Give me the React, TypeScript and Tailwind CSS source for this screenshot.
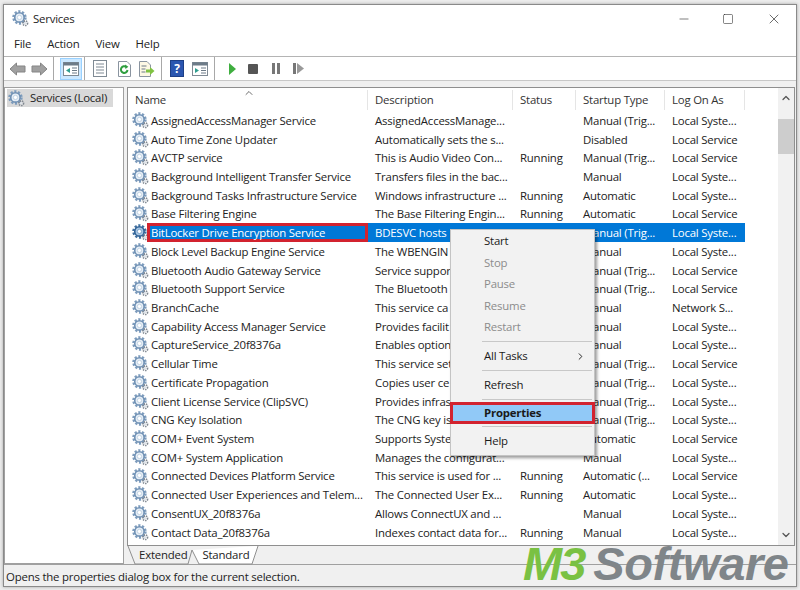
import { ChevronRight, ChevronUp, ChevronDown, Minus, Square, X } from "lucide-react";

const rows = [
  ["AssignedAccessManager Service", "AssignedAccessManage...", "", "Manual (Trig...", "Local Syste..."],
  ["Auto Time Zone Updater", "Automatically sets the s...", "", "Disabled", "Local Service"],
  ["AVCTP service", "This is Audio Video Con...", "Running", "Manual (Trig...", "Local Service"],
  ["Background Intelligent Transfer Service", "Transfers files in the bac...", "", "Manual", "Local Syste..."],
  ["Background Tasks Infrastructure Service", "Windows infrastructure ...", "Running", "Automatic", "Local Syste..."],
  ["Base Filtering Engine", "The Base Filtering Engin...", "Running", "Automatic", "Local Service"],
  ["BitLocker Drive Encryption Service", "BDESVC hosts", "", "Manual (Trig...", "Local Syste..."],
  ["Block Level Backup Engine Service", "The WBENGIN", "", "Manual", "Local Syste..."],
  ["Bluetooth Audio Gateway Service", "Service suppor", "", "Manual (Trig...", "Local Service"],
  ["Bluetooth Support Service", "The Bluetooth", "", "Manual (Trig...", "Local Service"],
  ["BranchCache", "This service ca", "", "Manual", "Network S..."],
  ["Capability Access Manager Service", "Provides facilit", "", "Manual", "Local Syste..."],
  ["CaptureService_20f8376a", "Enables option", "", "Manual", "Local Syste..."],
  ["Cellular Time", "This service set", "", "Manual (Trig...", "Local Service"],
  ["Certificate Propagation", "Copies user ce", "", "Manual (Trig...", "Local Syste..."],
  ["Client License Service (ClipSVC)", "Provides infras", "", "Manual (Trig...", "Local Syste..."],
  ["CNG Key Isolation", "The CNG key is", "", "Manual (Trig...", "Local Syste..."],
  ["COM+ Event System", "Supports Syste", "", "Automatic", "Local Service"],
  ["COM+ System Application", "Manages the configurat...", "", "Manual", "Local Syste..."],
  ["Connected Devices Platform Service", "This service is used for ...", "Running", "Automatic (...", "Local Service"],
  ["Connected User Experiences and Telem...", "The Connected User Ex...", "Running", "Automatic", "Local Syste..."],
  ["ConsentUX_20f8376a", "Allows ConnectUX and ...", "", "Manual", "Local Syste..."],
  ["Contact Data_20f8376a", "Indexes contact data for...", "Running", "Manual", "Local Syste..."],
  ["", "", "", "", ""],
];

const menu = [
  { label: "Start", h: "h-[22px]" },
  { label: "Stop", h: "h-[21px]", off: true },
  { label: "Pause", h: "h-[22px]", off: true },
  { label: "Resume", h: "h-[21px]", off: true },
  { label: "Restart", h: "h-[22px]", off: true, sep: true },
  { label: "All Tasks", h: "h-[22px]", arrow: true, sep: true },
  { label: "Refresh", h: "h-[22px]", sep: true },
  { label: "Properties", h: "h-[22px]", hot: true, sep: true },
  { label: "Help", h: "h-[22px]" },
];

function Gear({ size = 17, dark = false }: { size?: number; dark?: boolean }) {
  return (
    <svg width={size} height={size} viewBox="0 0 16 16" className="shrink-0">
      <circle cx="7" cy="7" r="5.6" fill="none" stroke={dark ? "#3f6f9f" : "#7d9cbd"} strokeWidth="2.4" strokeDasharray="2 1.52" />
      <circle cx="7" cy="7" r="4.4" fill={dark ? "#a9c6e2" : "#e6eef6"} stroke={dark ? "#2f6196" : "#6f90b4"} strokeWidth="1.5" />
      <circle cx="7" cy="7" r="2" fill="#fff" stroke={dark ? "#6f9bc6" : "#b9cde0"} strokeWidth="0.8" />
      <circle cx="12.4" cy="12.4" r="2.2" fill="none" stroke="#7f8790" strokeWidth="1.6" strokeDasharray="1.2 0.8" />
      <circle cx="12.4" cy="12.4" r="1.2" fill="#dfe3e8" />
    </svg>
  );
}

function Sep() {
  return <div className="w-px h-[23px] bg-[#a8a8a8] shrink-0" />;
}

function NavArrow({ flip = false }: { flip?: boolean }) {
  return (
    <svg width="17" height="14" viewBox="0 0 17 14" className="shrink-0">
      <path
        d={flip ? "M16 7 L9.5 1 V4 H1 V10 H9.5 V13 Z" : "M1 7 L7.5 1 V4 H16 V10 H7.5 V13 Z"}
        fill="#a0a0a0"
        stroke="#858585"
      />
    </svg>
  );
}

function ConsoleIcon({ right = false }: { right?: boolean }) {
  return (
    <svg width="16" height="14" viewBox="0 0 16 14" className="shrink-0">
      <rect x="0.5" y="0.5" width="15" height="13" fill="#fff" stroke="#7f8a94" />
      <rect x="0.5" y="0.5" width="15" height="3" fill="#6d7b88" />
      <path d={right ? "M3 6 L7 8.5 L3 11 Z" : "M7 6 L3 8.5 L7 11 Z"} fill="#2f9e8f" />
      <path d="M9 6h5M9 8.5h5M9 11h5" stroke="#6d7b88" />
    </svg>
  );
}

function Toolbar() {
  return (
    <div className="flex items-center h-[24px] shrink-0 border-t border-[#b4b4b4] bg-white pl-[5px]">
      <div className="flex items-center w-[44px] gap-[5px]"><NavArrow /><NavArrow flip /></div>
      <Sep />
      <div className="ml-[6px] flex items-center justify-center w-[22px] h-[22px] bg-[#cce8ff] border border-[#99d1ff]">
        <ConsoleIcon />
      </div>
      <div className="ml-[2px]"><Sep /></div>
      <svg width="16" height="17" viewBox="0 0 16 17" className="ml-[7px]">
        <rect x="1.5" y="0.5" width="13" height="16" fill="#fff" stroke="#7f8a94" />
        <path d="M4 4h8M4 7h8M4 10h8M4 13h8" stroke="#7f8a94" />
      </svg>
      <svg width="15" height="16" viewBox="0 0 15 16" className="ml-[9px]">
        <path d="M1.5 .5H10L13.5 4V15.5H1.5Z" fill="#fff" stroke="#8a94a0" />
        <path d="M10.5 9A3.3 3.3 0 1 1 9.3 6" fill="none" stroke="#2f9e3f" strokeWidth="2" />
        <path d="M8 3.6L11.4 5.8L8.4 8Z" fill="#2f9e3f" />
      </svg>
      <svg width="17" height="16" viewBox="0 0 17 16" className="ml-[6px]">
        <path d="M1.5 .5H9L12.5 4V15.5H1.5Z" fill="#fdf8e4" stroke="#8a94a0" />
        <path d="M3.5 5h5M3.5 8h4M3.5 11h4" stroke="#6d7b88" />
        <path d="M8 8.5H12V6L16.5 10L12 14V11.5H8Z" fill="#7fc241" />
      </svg>
      <div className="ml-[6px]"><Sep /></div>
      <div className="ml-[8px] flex items-center justify-center w-[14px] h-[17px] bg-[#2a56b0] border border-[#1d3f86] text-white text-[12px] font-bold leading-none">?</div>
      <div className="ml-[8px]"><ConsoleIcon right /></div>
      <div className="ml-[6px]"><Sep /></div>
      <svg width="7" height="12" viewBox="0 0 7 12" className="ml-[14px]"><path d="M0 0L7 6L0 12Z" fill="#3fae3f" /></svg>
      <div className="ml-[12px] w-[10px] h-[10px] rounded-[1px] bg-[#555]" />
      <div className="ml-[14px] flex gap-[2px]"><div className="w-[3px] h-[11px] bg-[#777]" /><div className="w-[3px] h-[11px] bg-[#777]" /></div>
      <div className="ml-[13px] flex items-center gap-[1px]">
        <div className="w-[3px] h-[11px] bg-[#777]" />
        <svg width="7" height="11" viewBox="0 0 7 11"><path d="M0 0L7 5.5L0 11Z" fill="#999" /></svg>
      </div>
    </div>
  );
}

function ContextMenu() {
  return (
    <div className="absolute left-[450px] top-[229px] w-[145px] h-[227px] bg-[#f2f2f2] border border-[#c4c4c4] shadow-[2px_2px_3px_rgba(0,0,0,0.4)] text-[#1a1a1a]">
      {menu.map((m) => (
        <div key={m.label}>
          <div
            className={
              m.hot
                ? "flex items-center h-[22px] -mx-px pl-[31px] bg-[#91c9f7] border-[3px] border-[#d2232f] font-bold -my-px relative"
                : `flex items-center ${m.h} pl-[33px] ${m.off ? "text-[#8c8c8c]" : ""}`
            }
          >
            {m.label}
            {m.arrow && <ChevronRight size={11} className="ml-auto mr-[8px]" />}
          </div>
          {m.sep && <div className="h-px bg-[#c8c8c8] mr-[2px] ml-[31px] my-[3px]" />}
        </div>
      ))}
    </div>
  );
}

export default function App() {
  return (
    <div className="relative w-[800px] h-[590px] overflow-hidden bg-[#ececec] pl-[3px] pt-[4px] font-['Open_Sans','Noto_Sans',sans-serif] text-[11.4px] tracking-[-0.2px] text-[#222]">
      <div className="flex flex-col h-[583px] w-[794px] bg-white border border-[#8a8a8a] shadow-[0_0_3px_rgba(0,0,0,0.3)]">
        <div className="flex items-center h-[27px] shrink-0 pl-[8px]">
          <Gear />
          <span className="ml-[4px]">Services</span>
          <div className="ml-auto flex items-center">
            <Minus size={14} strokeWidth={1} className="mr-[31px]" />
            <Square size={12} strokeWidth={1.1} className="mr-[32px]" />
            <X size={16} strokeWidth={1} className="mr-[14px]" />
          </div>
        </div>
        <div className="flex items-center h-[24px] shrink-0 pl-[10px] gap-[16px] text-[#222]">
          <span>File</span>
          <span>Action</span>
          <span>View</span>
          <span>Help</span>
        </div>
        <Toolbar />
        <div className="flex flex-1 min-h-0 bg-[#f0f0f0] pt-[6px] pr-px gap-[3px] border-t border-[#c8c8c8]">
          <div className="w-[120px] shrink-0 bg-white border border-[#a0a0a0] p-[1px]">
            <div className="flex items-center h-[18px] bg-[#d9d9d9] w-[106px] ml-px pl-px gap-[5px] whitespace-nowrap">
              <Gear />
              <span>Services (Local)</span>
            </div>
          </div>
          <div className="flex flex-col flex-1 min-w-0">
            <div className="flex h-[459px] shrink-0 bg-white border border-[#8f8f8f] overflow-hidden">
              <div className="flex-1 min-w-0 relative">
                <div className="grid grid-cols-[240px_145px_63px_89px_80px] h-[23px] pb-[3px] items-center relative">
                  <ChevronUp size={12} className="absolute left-[115px] -top-[1px] text-[#6d6d6d]" />
                  {["Name", "Description", "Status", "Startup Type", "Log On As"].map((h) => (
                    <div key={h} className="pl-[7px] h-[20px] mt-[2px] flex items-center border-r border-[#e5e5e5] text-[#333]">{h}</div>
                  ))}
                </div>
                {rows.map((r, i) => {
                  const sel = i === 6;
                  return (
                    <div key={i} className="grid grid-cols-[240px_145px_63px_89px_80px] h-[18.73px] items-center">
                      <div className="flex items-center pl-[4px] relative h-full">
                        {r[0] && <Gear dark={sel} />}
                        <span className={sel ? "absolute left-[19px] right-0 top-0 h-[19px] pl-[1px] flex items-center bg-[#0078d7] text-white border-[3px] border-[#d2232f] whitespace-nowrap" : "pl-[2px] whitespace-nowrap"}>{r[0]}</span>
                      </div>
                      {r.slice(1).map((c, j) => (
                        <div key={j} className={`pl-[7px] whitespace-nowrap overflow-hidden h-full flex items-center ${sel ? "bg-[#0078d7] text-white" : ""}`}>{c}</div>
                      ))}
                    </div>
                  );
                })}
              </div>
              <div className="w-[16px] shrink-0 flex flex-col items-center bg-[#f1f1f1]">
                <ChevronUp size={12} strokeWidth={2.5} className="mt-[4px] text-[#555]" />
                <div className="w-full h-[35px] mt-[15px] bg-[#cdcdcd]" />
                <ChevronDown size={12} strokeWidth={2.5} className="mt-auto mb-[4px] text-[#555]" />
              </div>
            </div>
            <div className="relative flex flex-1 pl-[12px] items-center gap-[15px] text-[#222]">
              <svg width="134" height="19" viewBox="0 0 134 19" className="absolute left-0 top-0">
                <path d="M65 4 L72 18 H125 L131 0" fill="#fff" stroke="#8f8f8f" />
                <path d="M1 0 L8 18 H61 L65 4" fill="none" stroke="#8f8f8f" />
              </svg>
              <span className="relative">Extended</span>
              <span className="relative">Standard</span>
            </div>
          </div>
        </div>
        <div className="flex items-center h-[22px] shrink-0 bg-[#f0f0f0] border-t border-[#a0a0a0] pl-[2px] pt-[3px]">
          Opens the properties dialog box for the current selection.
        </div>
      </div>
      <ContextMenu />
      <div className="absolute left-[523px] top-[544px] text-[47px] leading-[40px] font-bold italic font-['Liberation_Sans',sans-serif] whitespace-nowrap tracking-normal flex">
        <span className="text-[#7ac143] tracking-[-2px]">M3</span>
        <span className="text-[#7f8589] ml-[9px] tracking-[-0.4px]">Software</span>
      </div>
    </div>
  );
}
